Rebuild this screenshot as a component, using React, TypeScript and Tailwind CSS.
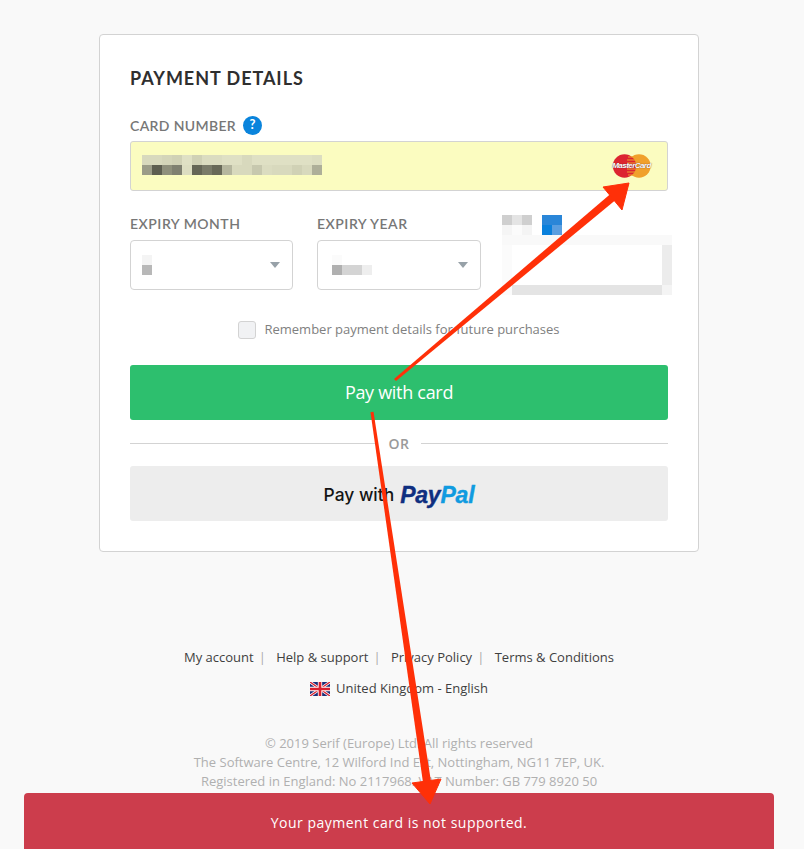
const PIX = ({ cols, cell, className = "" }: { cols: string[][]; cell: string; className?: string }) => (
  <div className={`flex flex-col ${className}`}>
    {cols.map((row, i) => (
      <div key={i} className="flex">
        {row.map((c, j) => (
          <div key={j} className={cell} style={{ background: c }} />
        ))}
      </div>
    ))}
  </div>
);

const cardBlur = [
  ["#d8d9bd","#d8d9bd","#d4d5b9","#d0d1b5","#dfe0c4","#d0d1b5","#dbdcc0","#dbdcc0","#dfe0c4","#dfe0c4","#d8d9bd","#dfe0c4","#dfe0c4","#dfe0c4","#dfe0c4","#dfe0c4","#dfe0c4","#dcddc1"],
  ["#9b9c88","#5d5e50","#8f907c","#7f8070","#dcddc1","#656656","#7a7b69","#686958","#b5b69e","#d8d9bd","#d8d9bd","#c7c8ae","#dbdcc0","#d8d9bd","#d8d9bd","#d0d1b5","#d8d9bd","#aeaf99"],
];

const Flag = () => (
  <svg width="20" height="14" viewBox="0 0 60 42" className="block">
    <rect width="60" height="42" fill="#1a2f7a" />
    <path d="M0 0L60 42M60 0L0 42" stroke="#fff" strokeWidth="8" />
    <path d="M0 0L60 42M60 0L0 42" stroke="#d8202f" strokeWidth="4" />
    <path d="M30 0V42M0 21H60" stroke="#fff" strokeWidth="13" />
    <path d="M30 0V42M0 21H60" stroke="#d8202f" strokeWidth="8" />
  </svg>
);

const MasterCard = () => (
  <div className="relative w-[39px] h-[24px]">
    <svg width="39" height="24" viewBox="0 0 39 24" className="block">
      <circle cx="27" cy="12" r="11.7" fill="#f0a02c" />
      <circle cx="12.5" cy="12" r="11.7" fill="#dc2430" />
      <path d="M16 3h7M15 6h9M15 9h9M15 15h9M15 18h9M16 21h7" stroke="#f0a02c" strokeWidth="1.2" />
    </svg>
    <span className="absolute left-0 top-[6px] w-[39px] flex justify-center text-white italic font-bold text-[8px] leading-[12px] tracking-[-0.55px] whitespace-nowrap [text-shadow:0_0_1px_#4a2020] font-['Liberation_Sans',sans-serif]">MasterCard</span>
  </div>
);

const Caret = () => <div className="w-0 h-0 border-x-[5px] border-x-transparent border-t-[6px] border-t-[#97a1a8]" />;

export default function App() {
  return (
    <div className="relative w-[804px] h-[849px] overflow-hidden bg-[#f9f9f9] font-['Lato',sans-serif]">
      <div className="w-[798px] flex flex-col items-center pt-[34px]">
        <div className="w-[600px] h-[518px] bg-white border border-[#d3d3d3] rounded-[4px] px-[30px] pt-[32px]">
          <h1 className="text-[18px] leading-[22px] font-bold text-[#2f2f2f] tracking-[0.95px]">PAYMENT DETAILS</h1>
          <div className="flex items-center gap-[7px] mt-[26px] h-[20px]">
            <span className="text-[14px] font-semibold text-[#777] tracking-[0.35px]">CARD NUMBER</span>
            <span className="w-[19px] h-[19px] rounded-full bg-[#0a84dc] text-white text-[13px] font-bold flex items-center justify-center">?</span>
          </div>
          <div className="mt-[6px] h-[50px] bg-[#fbfcc0] border border-[#d3d3d3] rounded-[3px] flex items-center justify-between pl-[11px] pr-[16px]">
            <PIX cols={cardBlur} cell="w-[10px] h-[10px]" className="mb-[2px]" />
            <MasterCard />
          </div>
          <div className="flex mt-[23px]">
            <div className="w-[163px] shrink-0">
              <div className="text-[14px] leading-[20px] font-semibold text-[#777] tracking-[0.5px]">EXPIRY MONTH</div>
              <div className="mt-[6px] h-[50px] border border-[#d3d3d3] rounded-[4px] flex items-center justify-between pl-[11px] pr-[12px]">
                <PIX cols={[["#f4f4f4"],["#b8b8b8"]]} cell="w-[10px] h-[10px]" />
                <Caret />
              </div>
            </div>
            <div className="w-[164px] shrink-0 ml-[24px]">
              <div className="text-[14px] leading-[20px] font-semibold text-[#777] tracking-[0.5px]">EXPIRY YEAR</div>
              <div className="mt-[6px] h-[50px] border border-[#d3d3d3] rounded-[4px] flex items-center justify-between pl-[14px] pr-[12px]">
                <PIX cols={[["#fbfbfb","#ffffff","#ffffff","#ffffff"],["#b0b0b0","#d4d4d4","#d4d4d4","#eeeeee"]]} cell="w-[10px] h-[10px]" />
                <Caret />
              </div>
            </div>
            <div className="ml-[21px] w-[170px] shrink-0 mt-[1px]">
              <div className="flex">
                <PIX cols={[["#cfcfcf","#e4e4e4","#cfcfcf"],["#f5f5f5","#fbfbfb","#f4f4f4"]]} cell="w-[10px] h-[10px]" />
                <PIX cols={[["#2a86d8","#2a86d8"],["#0a80dc","#5a9ee0"]]} cell="w-[10px] h-[10px]" className="ml-[10px]" />
              </div>
              <div className="w-[170px]">
                <div className="h-[10px] bg-[#f9f9f9]" />
                <div className="flex h-[40px]">
                  <div className="w-[10px] bg-[#fbfbfb]" />
                  <div className="flex-1 bg-white" />
                  <div className="w-[10px] bg-[#ececec]" />
                </div>
                <div className="flex h-[10px]">
                  <div className="w-[10px] bg-[#fbfbfb]" />
                  <div className="flex-1 bg-[#e4e4e4]" />
                  <div className="w-[10px] bg-[#f4f4f4]" />
                </div>
              </div>
            </div>
          </div>
          <div className="flex items-center justify-center gap-[8px] mt-[25px] h-[20px]">
            <span className="w-[18px] h-[18px] rounded-[3px] bg-[#f1f2f4] border border-[#d3d3d3]" />
            <span className="text-[13px] text-[#808080] font-['Open_Sans','Lato',sans-serif]">Remember payment details for future purchases</span>
          </div>
          <button className="mt-[25px] w-full h-[55px] rounded-[3px] bg-[#2dbf6e] text-white text-[18px] font-medium font-['Open_Sans',sans-serif] tracking-[-0.3px]">Pay with card</button>
          <div className="flex items-center mt-[13px] h-[20px]">
            <div className="flex-1 h-px bg-[#d3d3d3]" />
            <span className="px-[11px] text-[14px] font-semibold text-[#9a9a9a] tracking-[0.6px] font-['Open_Sans',sans-serif]">OR</span>
            <div className="flex-1 h-px bg-[#d3d3d3]" />
          </div>
          <button className="mt-[13px] w-full h-[55px] rounded-[3px] bg-[#ededed] flex items-center justify-center gap-[6px] pt-[3px]">
            <span className="text-[17.4px] font-medium text-[#141414] font-['Inter',sans-serif]">Pay with</span>
            <span className="text-[23px] leading-none font-bold italic font-['Liberation_Sans',sans-serif] tracking-[-0.2px] [-webkit-text-stroke:0.4px]">
              <span className="text-[#0f2f80]">Pay</span><span className="text-[#109be0]">Pal</span>
            </span>
          </button>
        </div>
        <div className="mt-[96px] flex items-center h-[20px] text-[13px] text-[#3f3f3f] font-['Open_Sans',sans-serif]">
          <span>My account</span><span className="ml-[5px] mr-[10.4px] text-[#aaa]">|</span>
          <span>Help &amp; support</span><span className="ml-[5px] mr-[10.4px] text-[#aaa]">|</span>
          <span>Privacy Policy</span><span className="ml-[5px] mr-[10.4px] text-[#aaa]">|</span>
          <span>Terms &amp; Conditions</span>
        </div>
        <div className="mt-[11px] flex items-center gap-[6px] h-[20px] text-[13px] text-[#3f3f3f] font-['Open_Sans',sans-serif]">
          <Flag />
          <span>United Kingdom - English</span>
        </div>
        <div className="mt-[35px] text-center text-[13px] leading-[19px] text-[#b0b0b0] font-['Open_Sans',sans-serif]">
          <div>© 2019 Serif (Europe) Ltd. All rights reserved</div>
          <div>The Software Centre, 12 Wilford Ind Est, Nottingham, NG11 7EP, UK.</div>
          <div>Registered in England: No 2117968. VAT Number: GB 779 8920 50</div>
        </div>
      </div>
      <div className="absolute left-[24px] top-[793px] w-[750px] h-[56px] rounded-t-[4px] bg-[#cc3d4c] flex items-center justify-center pt-[2px] text-white text-[14px] tracking-[0.5px] font-['Open_Sans',sans-serif]">
        Your payment card is not supported.
      </div>
      <svg className="absolute inset-0 pointer-events-none" width="804" height="849" viewBox="0 0 804 849">
        <path d="M394 379L396 381.1L615.6 200L610.4 193.9Z" fill="#ff3008" />
        <path d="M603 187L629 183L622 210Z" fill="#ff3008" stroke="#ff3008" strokeWidth="1" strokeLinejoin="round" />
        <path d="M370.5 412.2L373.5 411.8L431 781.4L423 782.6Z" fill="#ff3008" />
        <path d="M412 783L441 779L430 804Z" fill="#ff3008" stroke="#ff3008" strokeWidth="1" strokeLinejoin="round" />
      </svg>
    </div>
  );
}
